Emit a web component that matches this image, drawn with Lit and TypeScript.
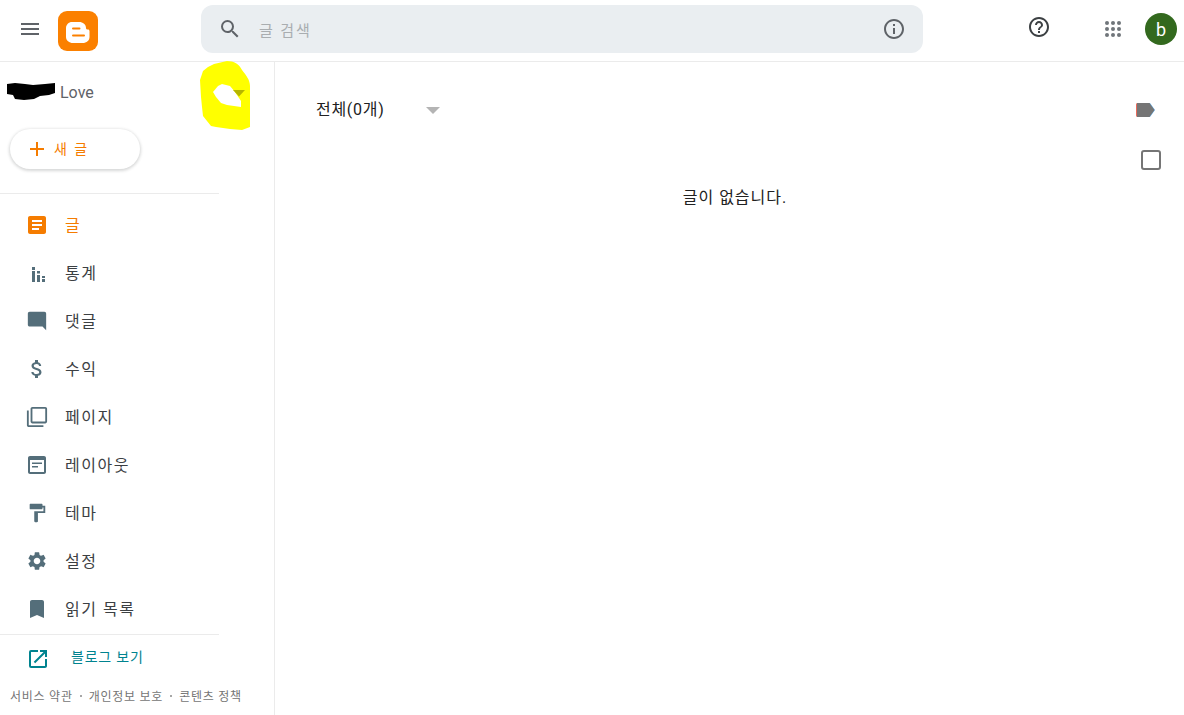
import { LitElement, html, css, svg } from "lit";
import { customElement } from "lit/decorators.js";

const P = {
  menu: "M3 18h18v-2H3v2zm0-5h18v-2H3v2zm0-7v2h18V6H3z",
  search: "M15.5 14h-.79l-.28-.27A6.471 6.471 0 0 0 16 9.5 6.5 6.5 0 1 0 9.5 16c1.61 0 3.09-.59 4.23-1.57l.27.28v.79l5 4.99L20.49 19l-4.99-5zm-6 0C7.01 14 5 11.99 5 9.5S7.01 5 9.5 5 14 7.01 14 9.5 11.99 14 9.5 14z",
  info: "M11 7h2v2h-2zm0 4h2v6h-2zm1-9C6.48 2 2 6.48 2 12s4.48 10 10 10 10-4.48 10-10S17.52 2 12 2zm0 18c-4.41 0-8-3.59-8-8s3.59-8 8-8 8 3.59 8 8-3.59 8-8 8z",
  help: "M11 18h2v-2h-2v2zm1-16C6.48 2 2 6.48 2 12s4.48 10 10 10 10-4.48 10-10S17.52 2 12 2zm0 18c-4.41 0-8-3.59-8-8s3.59-8 8-8 8 3.59 8 8-3.59 8-8 8zm0-14c-2.21 0-4 1.79-4 4h2c0-1.1.9-2 2-2s2 .9 2 2c0 2-3 1.75-3 5h2c0-2.25 3-2.5 3-5 0-2.21-1.79-4-4-4z",
  posts: "M19 3H5c-1.1 0-2 .9-2 2v14c0 1.1.9 2 2 2h14c1.1 0 2-.9 2-2V5c0-1.1-.9-2-2-2zm-5 14H7v-2h7v2zm3-4H7v-2h10v2zm0-4H7V7h10v2z",
  stats: "M7 6h3v3H7zM7 10h3v11H7zM12 10h3v2.5h-3zM12 14h3v7h-3zM17 15h3v2h-3zM17 18h3v3h-3z",
  comment: "M21.99 4c0-1.1-.89-2-1.99-2H4c-1.1 0-2 .9-2 2v12c0 1.1.9 2 2 2h14l4 4-.01-18z",
  dollar: "M11.8 10.9c-2.27-.59-3-1.2-3-2.15 0-1.09 1.01-1.85 2.7-1.85 1.78 0 2.44.85 2.5 2.1h2.21c-.07-1.72-1.12-3.3-3.21-3.81V3h-3v2.16c-1.94.42-3.5 1.68-3.5 3.61 0 2.31 1.91 3.46 4.7 4.13 2.5.6 3 1.48 3 2.41 0 .69-.49 1.79-2.7 1.79-2.06 0-2.87-.92-2.98-2.1h-2.2c.12 2.19 1.76 3.42 3.68 3.83V21h3v-2.15c1.95-.37 3.5-1.5 3.5-3.55 0-2.84-2.43-3.81-4.7-4.4z",
  pages: "M3 5H1v16c0 1.1.9 2 2 2h16v-2H3V5zm18-4H7c-1.1 0-2 .9-2 2v14c0 1.1.9 2 2 2h14c1.1 0 2-.9 2-2V3c0-1.1-.9-2-2-2zm0 16H7V3h14v14z",
  layout: "M19 3H5c-1.1 0-2 .9-2 2v14c0 1.1.9 2 2 2h14c1.1 0 2-.9 2-2V5c0-1.1-.9-2-2-2zm0 16H5V7h14v12zM7 9.500h10V11H7zM7 13h6v1.500H7z",
  theme: "M18 4V3c0-.55-.45-1-1-1H5c-.55 0-1 .45-1 1v4c0 .55.45 1 1 1h12c.55 0 1-.45 1-1V6h1v4H9v11c0 .55.45 1 1 1h2c.55 0 1-.45 1-1v-9h8V4h-3z",
  settings: "M19.14 12.94c.04-.3.06-.61.06-.94 0-.32-.02-.64-.07-.94l2.03-1.58a.49.49 0 0 0 .12-.61l-1.92-3.32a.488.488 0 0 0-.59-.22l-2.39.96c-.5-.38-1.03-.7-1.62-.94l-.36-2.54a.484.484 0 0 0-.48-.41h-3.84c-.24 0-.43.17-.47.41l-.36 2.54c-.59.24-1.13.57-1.62.94l-2.39-.96c-.22-.08-.47 0-.59.22L2.74 8.87c-.12.21-.08.47.12.61l2.03 1.58c-.05.3-.09.63-.09.94s.02.64.07.94l-2.03 1.58a.49.49 0 0 0-.12.61l1.92 3.32c.12.22.37.29.59.22l2.39-.96c.5.38 1.03.7 1.62.94l.36 2.54c.05.24.24.41.48.41h3.84c.24 0 .44-.17.47-.41l.36-2.54c.59-.24 1.13-.56 1.62-.94l2.39.96c.22.08.47 0 .59-.22l1.92-3.32c.12-.22.07-.47-.12-.61l-2.01-1.58zM12 15.6c-1.98 0-3.6-1.62-3.6-3.6s1.62-3.6 3.6-3.6 3.6 1.62 3.6 3.6-1.62 3.6-3.6 3.6z",
  bookmark: "M17 3H7c-1.1 0-1.99.9-1.99 2L5 21l7-3 7 3V5c0-1.1-.9-2-2-2z",
  open: "M19 19H5V5h7V3H5a2 2 0 0 0-2 2v14a2 2 0 0 0 2 2h14c1.1 0 2-.9 2-2v-7h-2v7zM14 3v2h3.59l-9.83 9.83 1.41 1.41L19 6.41V10h2V3h-7z",
};

const icon = (d: string, cls = "") =>
  html`<svg class="icon ${cls}" viewBox="0 0 24 24" aria-hidden="true"><path d=${d}></path></svg>`;

const SMALL = new Set(["comment", "pages", "theme", "settings"]);

const NAV: [string, string, boolean?][] = [
  ["posts", "글", true],
  ["stats", "통계"],
  ["comment", "댓글"],
  ["dollar", "수익"],
  ["pages", "페이지"],
  ["layout", "레이아웃"],
  ["theme", "테마"],
  ["settings", "설정"],
  ["bookmark", "읽기 목록"],
];

const dots = [6, 12, 18].flatMap((y) =>
  [6, 12, 18].map((x) => svg`<circle cx=${x} cy=${y} r="2"></circle>`)
);

@customElement("app-root")
export class AppRoot extends LitElement {
  static styles = css`
    :host {
      display: block;
      position: relative;
      width: 1184px;
      height: 715px;
      overflow: hidden;
      background: #fff;
      color: #3c4043;
      font-family: Roboto, "Noto Sans CJK KR", sans-serif;
      font-size: 16px;
    }
    .icon { display: block; width: 24px; height: 24px; fill: currentColor; flex: none; }
    .icon.small { width: 22px; height: 22px; margin: 0 1px; }

    header {
      display: flex;
      align-items: center;
      height: 61px;
      border-bottom: 1px solid #ebebeb;
      box-sizing: content-box;
    }
    .menu { margin: -4px 0 0 18px; color: #5f6368; width: 24px; }
    .logo { width: 40px; height: 40px; margin: 1px 0 0 16px; flex: none; }
    .search {
      display: flex;
      align-items: center;
      width: 722px;
      height: 48px;
      margin: -3px 0 0 103px;
      box-sizing: border-box;
      padding: 0 17px;
      background: #eaeef1;
      border-radius: 12px;
      color: #5f6368;
      flex: none;
    }
    .placeholder {
      flex: 1;
      margin-left: 17px;
      color: #a9adb0;
      font-size: 15px;
      letter-spacing: 1.9px;
    }
    .help { margin: -7px 0 0 104px; color: #3c4043; }
    .apps { margin: -3px 0 0 50px; color: #70757a; }
    .avatar {
      width: 32px;
      height: 32px;
      margin: -3px 0 0 20px;
      border-radius: 50%;
      background: #33691e;
      color: #fff;
      font-size: 18px;
      display: flex;
      align-items: center;
      justify-content: center;
      flex: none;
    }

    .body { display: flex; height: 653px; }
    aside {
      width: 274px;
      flex: none;
      border-right: 1px solid #ebebeb;
      display: flex;
      flex-direction: column;
    }
    .blog {
      display: flex;
      align-items: center;
      height: 60px;
      padding-left: 7px;
      color: #5f6368;
    }
    .redact { width: 48px; height: 18px; margin-right: 5px; flex: none; }
    .new {
      display: flex;
      align-items: center;
      width: 130px;
      height: 40px;
      margin: 7px 0 0 10px;
      box-sizing: border-box;
      padding-left: 17px;
      border-radius: 20px;
      background: #fff;
      box-shadow: 0 1px 3px 1px rgba(60, 64, 67, 0.2);
      color: #f57c00;
      font-size: 14px;
      letter-spacing: 2px;
    }
    .new span { margin: 0 0 3px 1px; }
    .plus { width: 24px; height: 24px; margin: 0 4px 0 -2px; fill: #f57c00; flex: none; }
    .rule { width: 219px; height: 1px; background: #ebebeb; flex: none; }
    .rule.top { margin: 24px 0 7px; }
    .rule.bottom { margin-top: 1px; }
    nav { display: flex; flex-direction: column; }
    .item {
      display: flex;
      align-items: center;
      height: 48px;
      padding-left: 25px;
      gap: 16px;
      white-space: nowrap;
      letter-spacing: 1.5px;
    }
    .item span { margin-bottom: 2px; }
    .item .icon { color: #546e7a; }
    .item.active, .item.active .icon { color: #f57c00; }
    .view {
      display: flex;
      align-items: center;
      height: 46px;
      padding-left: 26px;
      gap: 21px;
      color: #00838f;
      font-size: 14px;
      letter-spacing: 0.8px;
    }
    .view .icon { margin-top: 2px; }
    .view span { margin-bottom: 4px; }
    .legal {
      display: flex;
      align-items: center;
      gap: 7px;
      margin: 6px 0 0 10px;
      color: #757575;
      font-size: 12px;
      letter-spacing: 0.75px;
      white-space: nowrap;
    }
    .sep { width: 2px; height: 2px; border-radius: 50%; background: #8a8a8a; }

    main { flex: 1; min-width: 0; display: flex; flex-direction: column; }
    .toolbar {
      display: flex;
      align-items: center;
      height: 48px;
      margin-top: 23px;
      padding: 0 28px 0 41px;
      color: #212121;
    }
    .count { width: 110px; letter-spacing: 0.7px; margin-bottom: 2px; }
    .caret { width: 0; height: 0; border-left: 7px solid transparent; border-right: 7px solid transparent; border-top: 7px solid #b4b4b4; margin-top: 2px; }
    .spacer { flex: 1; }
    .label { width: 21px; height: 16px; flex: none; margin-top: 2px; }
    .checkrow { display: flex; justify-content: flex-end; padding-right: 23px; margin-top: 17px; }
    .check {
      width: 20px;
      height: 20px;
      box-sizing: border-box;
      border: 2px solid #757575;
      border-radius: 3px;
    }
    .empty { text-align: center; margin: 16px 0 0 11px; color: #212121; line-height: 24px; letter-spacing: 1px; }

    .blob { position: absolute; left: 0; top: 0; width: 260px; height: 140px; pointer-events: none; }
  `;

  render() {
    return html`
      <header>
        <div class="menu">${icon(P.menu)}</div>
        <svg class="logo" viewBox="0 0 40 40" aria-hidden="true">
          <rect width="40" height="40" rx="9" fill="#fb8000"></rect>
          <path fill="#fff" d="M14 11h7c4 0 7 2.500 7 6 0 1.200.8 1.500 2 1.500.8 0 1.500.6 1.500 1.500V26c0 3.500-2.800 6-7 6H15c-3.700 0-7-2.500-7-6V17c0-3.300 2.700-6 6-6z"></path>
          <rect x="14" y="16.500" width="8.500" height="2" rx="1" fill="#fb8000"></rect>
          <rect x="14" y="23.500" width="13" height="2" rx="1" fill="#fb8000"></rect>
        </svg>
        <div class="search">
          ${icon(P.search)}
          <span class="placeholder">글 검색</span>
          ${icon(P.info)}
        </div>
        <div class="help">${icon(P.help)}</div>
        <div class="apps">
          <svg class="icon" viewBox="0 0 24 24" aria-hidden="true">${dots}</svg>
        </div>
        <div class="avatar">b</div>
      </header>
      <div class="body">
        <aside>
          <div class="blog">
            <svg class="redact" viewBox="0 0 48 18" aria-hidden="true">
              <path fill="#000" d="M0 1 8 0l10 1 8 1 12-1 10-1v10l-6 2-9 1-6 3-10 1-9-1-2-4-6-1-2-5z"></path>
            </svg>
            <span>Love</span>
          </div>
          <div class="new">
            <svg class="plus" viewBox="0 0 24 24" aria-hidden="true"><path d="M19 13h-6v6h-2v-6H5v-2h6V5h2v6h6v2z"></path></svg>
            <span>새 글</span>
          </div>
          <div class="rule top"></div>
          <nav>
            ${NAV.map(
              ([k, t, a]) => html`<div class="item ${a ? "active" : ""}">
                ${icon((P as Record<string, string>)[k], SMALL.has(k) ? "small" : "")}<span>${t}</span>
              </div>`
            )}
          </nav>
          <div class="rule bottom"></div>
          <div class="view">${icon(P.open)}<span>블로그 보기</span></div>
          <div class="legal">
            <span>서비스 약관</span><i class="sep"></i><span>개인정보 보호</span><i class="sep"></i><span>콘텐츠 정책</span>
          </div>
        </aside>
        <main>
          <div class="toolbar">
            <span class="count">전체(0개)</span>
            <span class="caret"></span>
            <span class="spacer"></span>
            <svg class="label" viewBox="0 0 21 16" aria-hidden="true">
              <path fill="#ea6a5a" d="M2.500 1h3v14h-3C1.600 15 1 14.400 1 13.500v-11C1 1.600 1.600 1 2.500 1z"></path>
              <path fill="#64b5f6" d="M14 1h1l5 7-5 7h-1z"></path>
              <path fill="#757575" d="M2 1h12.500L19.500 8l-5 7H2z"></path>
            </svg>
          </div>
          <div class="checkrow"><div class="check"></div></div>
          <div class="empty">글이 없습니다.</div>
        </main>
      </div>
      <svg class="blob" viewBox="0 0 260 140" aria-hidden="true">
        <path fill="#ffff00" d="M227 61c7 0 12 3 15 9 4 5 8 10 8 16v41l-8 3-12-1-14-2-5-1-8-10-1-9-1-10-1-17 3-9 5-4 6-3z"></path>
        <path fill="#fff" d="M213 92l5-6 4-2 8 2 5 6 6 9v6l-14-2-6-2-5-6z"></path>
        <path fill="#b5b500" d="M233 90h12l-6 6.500z"></path>
      </svg>
    `;
  }
}
